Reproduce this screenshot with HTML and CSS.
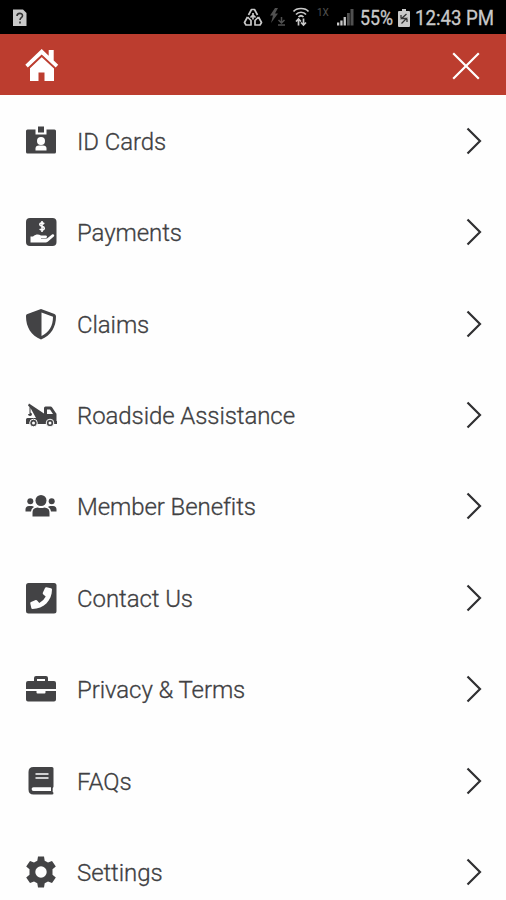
FILE: index.html
```html
<!DOCTYPE html>
<html lang="en">
<head>
    <meta charset="UTF-8">
    <meta name="viewport" content="width=device-width, initial-scale=1.0">
    <title>Menu</title>
    <link rel="stylesheet" href="styles.css">
</head>
<body>
    <div class="status-bar">
        <svg class="status-left" width="14" height="18" viewBox="0 0 14 18">
            <path fill="#c9c9c9" d="M0 .5h10l3.500 3.500v13H0z"/>
            <path fill="none" stroke="#333" stroke-width="1.6" d="M4 7C4 3.500 9.500 3.500 9.500 6.700c0 2-2.500 2-2.500 4.300M7 12.600v1.800"/>
        </svg>
        <!-- data saver, flash, wifi, 1X, signal -->
        <svg class="status-icons" width="116" height="24" viewBox="0 0 116 24">
            <g fill="none" stroke="#c9c9c9" stroke-width="1.700" stroke-linejoin="round">
                <path d="M5.500 9l3-5.500h3l3 5.500M4.500 11L1.500 16.500 3 19h5v-4.500L4.500 11M15.500 11l3 5.500L17 19h-5v-4.500l3.500-3.500M10 7v6.500M7.500 11.500L10 9l2.500 2.500"/>
            </g>
            <path fill="#505050" d="M32 2l-5 7.500h3L28 17l7-9.500h-3l3-5.500z"/>
            <path fill="none" stroke="#505050" stroke-width="1.500" d="M35 19h7M38.500 11v6M35.500 14l3 3 3-3"/>
            <g fill="none" stroke="#c9c9c9" stroke-width="1.700">
                <path d="M50.500 5.500c3-4 12-4 15 0M53 8.500c2.500-3 7.500-3 10 0M55.500 11c1.500-1.500 3.500-1.500 5 0"/>
                <path d="M55.500 13v6.500M53 15.500l2.500-2.500 2.500 2.500M60.500 12.500v6.500M58 16.500l2.500 2.500 2.500-2.500"/>
            </g>
            <text class="network" x="74" y="10">1X</text>
            <path fill="#c9c9c9" d="M94 16.500h2.300v3H94zM97.300 14.500h2.300v5h-2.300zM100.600 11h2.300v8.500h-2.300z"/>
            <path fill="#505050" d="M104 7h2.800v12.500H104zM107.500 3h3v16.500h-3z"/>
        </svg>
        <svg class="battery-text" width="34" height="28">
            <text x="0" y="21.300" textLength="33" lengthAdjust="spacingAndGlyphs">55%</text>
        </svg>
        <svg class="battery" width="12" height="18" viewBox="0 0 12 18">
            <path fill="#c9c9c9" d="M4 0h4v2h3q1 0 1 1v14q0 1-1 1H1q-1 0-1-1V3q0-1 1-1h3z"/>
            <path fill="none" stroke="#333" stroke-width="1.300" d="M8.500 5l-5 4.500h5l-5 5M3 6v3M9 10v3"/>
        </svg>
        <svg class="clock" width="80" height="28">
            <text x="0" y="21.300" textLength="79" lengthAdjust="spacingAndGlyphs">12:43 PM</text>
        </svg>
    </div>

    <header class="header">
        <a href="#" aria-label="Home">
            <svg width="34" height="34" viewBox="0 0 34 34" fill="#fff">
                <path d="M17 7L5 18.500V32h8.500v-8.500h6V32H29V18.500z"/>
                <path d="M16.700 0L.3 15.800l2.500 2.800L16.700 5.500l14 13.100 2.500-2.800-4.500-4.300V1h-5v5.700z"/>
                <path fill="none" stroke="#bc3d2f" stroke-width="1.300" d="M4 19.300L16.700 7.200l13 12.100"/>
            </svg>
        </a>
        <a href="#" aria-label="Close">
            <svg width="28" height="28" viewBox="0 0 28 28" fill="none" stroke="#fff" stroke-width="2.200">
                <path d="M1.200 1.200l25.600 25.600M26.800 1.200L1.200 26.800"/>
            </svg>
        </a>
    </header>

    <nav class="menu">
        <a class="menu-item" href="#">
            <svg class="icon" viewBox="0 0 32 32">
                <path d="M2.500 4.500h8v5h11v-5h8q1.500 0 1.500 1.500v21q0 1.500-1.500 1.500h-27Q1 28.500 1 27V6q0-1.500 1.500-1.500z"/>
                <path d="M13 1.500h6v6h-6z"/>
                <circle class="cut" cx="16" cy="16" r="4"/>
                <path class="cut" d="M10.500 25.500v-2q0-3 3.500-3h4q3.500 0 3.500 3v2z"/>
            </svg>
            <span class="label">ID Cards</span>
            <svg class="arrow" viewBox="0 0 16 28"><path d="M1.500 1.500L14 14 1.500 26.500"/></svg>
        </a>
        <a class="menu-item" href="#">
            <svg class="icon" viewBox="0 0 32 32">
                <rect x="1" y="2" width="30.500" height="28" rx="4"/>
                <path class="cut" d="M5.500 20.500H8c3-2.500 5.500-2.500 8-1h4.500c2 0 2 2.500 0 2.500h-4.500v.6h6l5-4c1.500-1 3 .5 1.800 2l-5.800 5c-1 .9-1.500 1-3 1H5.500z"/>
                <path class="line" d="M19.300 7.800c-2.800-1.600-4.500-.8-4.500.8 0 2.300 4.500 1.200 4.500 3.600 0 1.800-2.300 2.300-4.700.9M17 5v11"/>
            </svg>
            <span class="label">Payments</span>
            <svg class="arrow" viewBox="0 0 16 28"><path d="M1.500 1.500L14 14 1.500 26.500"/></svg>
        </a>
        <a class="menu-item" href="#">
            <svg class="icon" viewBox="0 0 32 32">
                <path fill-rule="evenodd" d="M16 1l13.500 5q1.500.6 1.500 2.500C31 19 26 27.500 16 31.500 6 27.500 1 19 1 8.500 1 6.600 1.500 6.300 2.500 6zM16.500 4.500V28C24 24.500 28 18 28 8.700z"/>
            </svg>
            <span class="label">Claims</span>
            <svg class="arrow" viewBox="0 0 16 28"><path d="M1.500 1.500L14 14 1.500 26.500"/></svg>
        </a>
        <a class="menu-item" href="#">
            <svg class="icon" viewBox="0 0 32 32">
                <path fill-rule="evenodd" d="M4 4.500l15 10V9q0-1.500 1.500-1.500h5q1 0 1.700 1l3.300 5q1 .5 1 2V22h.5v3H1v-4.500q0-1.500 1.500-1.500H11L5.500 9v4.500Q7 14 7 15.500 6.500 17 5 17q-2 0-2-2h1.500V8L3 6.500zM22 10.500V15h6l-3-4.500z"/>
                <circle class="wheel" cx="8.500" cy="24" r="3.800"/>
                <circle class="wheel" cx="25" cy="24" r="3.800"/>
                <circle class="cut" cx="8.500" cy="24" r="1.500"/>
                <circle class="cut" cx="25" cy="24" r="1.500"/>
            </svg>
            <span class="label">Roadside Assistance</span>
            <svg class="arrow" viewBox="0 0 16 28"><path d="M1.500 1.500L14 14 1.500 26.500"/></svg>
        </a>
        <a class="menu-item" href="#">
            <svg class="icon" viewBox="0 0 32 32">
                <circle cx="16" cy="10.500" r="5.500"/>
                <circle cx="5.300" cy="11.300" r="3"/>
                <circle cx="26.700" cy="11.300" r="3"/>
                <path d="M7.500 26.500V23q0-5.500 5-5.500 3.500 1 7 0 5 0 5 5.500v3.500zM.5 21.500v-2q0-3.500 3.500-3.500h2.500q1.700 0 2.500 1Q6.500 18 6 21.500zM31.500 21.500v-2q0-3.500-3.500-3.500h-2.500q-1.700 0-2.500 1Q25.500 18 26 21.500z"/>
            </svg>
            <span class="label">Member Benefits</span>
            <svg class="arrow" viewBox="0 0 16 28"><path d="M1.500 1.500L14 14 1.500 26.500"/></svg>
        </a>
        <a class="menu-item" href="#">
            <svg class="icon" viewBox="0 0 32 32">
                <rect x="1" y="1" width="30.500" height="30.500" rx="2.500"/>
                <path class="cut" d="M21.500 5.300l4.500 1q1 .3 1 1.200C27 18.500 18.500 27 7.500 27q-1 0-1.200-1l-1-4.500q-.2-1 .7-1.400l4.700-2q.8-.3 1.400.3l2.200 2.600q4.300-2.200 6.400-6.600l-2.600-2.200q-.6-.6-.3-1.400l2.200-4.800q.5-.9 1.500-.7z"/>
            </svg>
            <span class="label">Contact Us</span>
            <svg class="arrow" viewBox="0 0 16 28"><path d="M1.500 1.500L14 14 1.500 26.500"/></svg>
        </a>
        <a class="menu-item" href="#">
            <svg class="icon" viewBox="0 0 32 32">
                <path fill-rule="evenodd" d="M9 8V5q0-2 2-2h10q2 0 2 2v3h6q2 0 2 2v6H1v-6q0-2 2-2zm3 0h8V6h-8z"/>
                <path d="M1 18h10.500v1.500q0 1 1 1h7q1 0 1-1V18H31v8.500q0 2-2 2H3q-2 0-2-2z"/>
            </svg>
            <span class="label">Privacy &amp; Terms</span>
            <svg class="arrow" viewBox="0 0 16 28"><path d="M1.500 1.500L14 14 1.500 26.500"/></svg>
        </a>
        <a class="menu-item" href="#">
            <svg class="icon" viewBox="0 0 32 32">
                <path d="M8.500 2H27q1.500 0 1.500 1.500v18q0 1-.8 1.400v4q.8.200.8 1.100 0 1.500-1.500 1.500H8.500q-5 0-5-5V7q0-5 5-5z"/>
                <path class="cut" d="M8.500 22.200h17.500v3.800H8.500q-1.900 0-1.900-1.900t1.900-1.900z"/>
                <path class="line" d="M10.500 9h13M10.500 13h13"/>
            </svg>
            <span class="label">FAQs</span>
            <svg class="arrow" viewBox="0 0 16 28"><path d="M1.500 1.500L14 14 1.500 26.500"/></svg>
        </a>
        <a class="menu-item" href="#">
            <svg class="icon" viewBox="0 0 32 32">
                <path fill-rule="evenodd" d="M13 .5h6l.7 4.200 3.300 1.900 4-1.600 3.800 5.500-3.300 2.700v5.600l3.300 2.700L27 27l-4-1.600-3.300 1.900L19 31.500h-6l-.7-4.200L9 25.400 5 27l-3.800-5.500 3.300-2.700v-5.600l-3.300-2.700L5 5l4 1.600 3.300-1.900zM16 10.300a5.700 5.700 0 1 0 0 11.400 5.700 5.700 0 0 0 0-11.400z"/>
            </svg>
            <span class="label">Settings</span>
            <svg class="arrow" viewBox="0 0 16 28"><path d="M1.500 1.500L14 14 1.500 26.500"/></svg>
        </a>
    </nav>
</body>
</html>
```
FILE: styles.css
```css
body {
    margin: 0;
    height: 900px;
    overflow: hidden;
    background-color: #fefefe;
    font-family: Roboto, sans-serif;
}
svg {
    display: block;
    flex-shrink: 0;
    overflow: visible;
}
.status-bar {
    display: flex;
    align-items: center;
    box-sizing: border-box;
    height: 34px;
    padding: 2px 11px 0 13px;
    background-color: #000;
}
.status-left {
    margin-right: auto;
}
.status-icons {
    margin-right: 1px;
}
.status-bar text {
    font-size: 20px;
    fill: #c9c9c9;
    stroke: #c9c9c9;
    stroke-width: 0.3;
}
.status-bar .network {
    font-size: 10px;
    fill: #505050;
    stroke: none;
}
.battery {
    margin: 0 5px 0 4px;
}
.header {
    display: flex;
    justify-content: space-between;
    align-items: center;
    box-sizing: border-box;
    height: 61px;
    padding: 2px 26px 0 25px;
    background-color: #bc3d2f;
}
.menu-item {
    display: flex;
    align-items: center;
    height: 91.45px;
    padding: 0 24px 0 25px;
    color: #404042;
    text-decoration: none;
}
.icon {
    width: 32px;
    height: 32px;
    fill: #434345;
}
.icon .cut {
    fill: #fefefe;
}
.icon .line {
    fill: none;
    stroke: #fefefe;
    stroke-width: 1.6;
}
.icon .wheel {
    stroke: #fefefe;
    stroke-width: 1;
}
.label {
    flex: 1;
    margin-left: 20px;
    padding-top: 2px;
    font-size: 24px;
    font-weight: 300;
    letter-spacing: -0.08px;
    -webkit-text-stroke: 0.3px #404042;
}
.arrow {
    width: 16px;
    height: 28px;
    fill: none;
    stroke: #303032;
    stroke-width: 2.2;
}
```
